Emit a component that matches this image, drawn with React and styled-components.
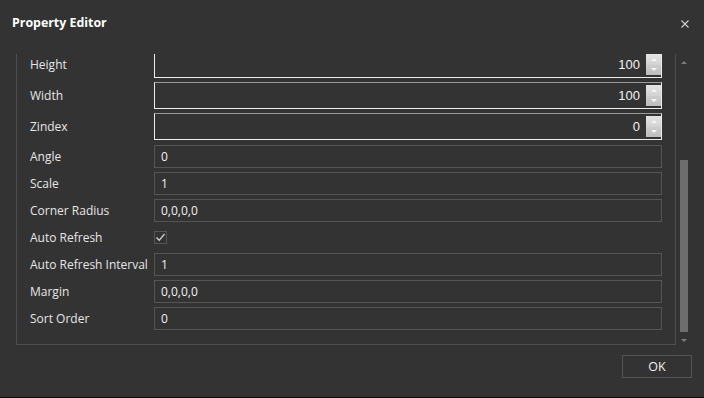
import styled, { createGlobalStyle } from 'styled-components';

const GlobalStyle = createGlobalStyle`
  html, body {
    margin: 0;
    padding: 0;
    background: #333333;
  }
  * {
    box-sizing: border-box;
  }
`;

const Window = styled.div`
  width: 704px;
  height: 398px;
  display: flex;
  flex-direction: column;
  background: #333333;
  border-bottom: 1px solid #0c0c0c;
  font-family: 'Open Sans', 'Noto Sans', sans-serif;
  color: #e8e8e8;
  overflow: hidden;
`;

const TitleBar = styled.div`
  height: 44px;
  display: flex;
  align-items: center;
  justify-content: space-between;
  padding: 0 15px 0 12px;
`;

const Title = styled.div`
  font-size: 12.4px;
  font-weight: 700;
  color: #ffffff;
`;

const CloseButton = styled.button`
  width: 8px;
  height: 8px;
  margin-top: 4px;
  padding: 0;
  border: none;
  background: none;
  display: flex;
  cursor: pointer;
`;

const Body = styled.div`
  padding: 10px 12px 0 16px;
  display: flex;
  height: 304px;
`;

const Viewport = styled.div`
  flex: 1;
  height: 294px;
  display: flex;
  flex-direction: column;
  justify-content: flex-end;
  overflow: hidden;
`;

const Frame = styled.div`
  border: 1px solid #4f4f4f;
  margin-bottom: 3px;
  padding: 0 13px 12px 13px;
`;

const Row = styled.div`
  height: ${(p) => (p.$tall ? 31 : 27)}px;
  padding: ${(p) => (p.$tall ? '1px 0 3px' : '0')};
  display: grid;
  grid-template-columns: 124px 1fr;
  align-items: center;
`;

const Label = styled.div`
  font-size: 12px;
  color: #e6e6e6;
  white-space: nowrap;
`;

const TextBox = styled.div`
  height: 23px;
  border: 1px solid #555555;
  display: flex;
  align-items: center;
  padding-left: 6px;
  font-size: 12px;
  color: #f2f2f2;
`;

const SpinBox = styled.div`
  height: 27px;
  border: 1px solid #ececec;
  border-top-color: #9a9a9a;
  display: flex;
  align-items: center;
  justify-content: flex-end;
  padding: 2px 0 2px 6px;
  font-family: 'Liberation Sans', Arial, sans-serif;
  font-size: 13px;
  color: #f2f2f2;
`;

const SpinValue = styled.span`
  margin-right: 6px;
`;

const SpinButtons = styled.div`
  width: 15px;
  height: 100%;
  display: flex;
  flex-direction: column;
`;

const SpinHalf = styled.div`
  flex: 1;
  display: flex;
  align-items: center;
  justify-content: center;
  background: ${(p) =>
    p.$up
      ? 'linear-gradient(#e4e4e4, #d2d2d2)'
      : 'linear-gradient(#cdcdcd, #bdbdbd)'};
`;

const Tri = styled.div`
  width: 0;
  height: 0;
  border-left: 3px solid transparent;
  border-right: 3px solid transparent;
  ${(p) =>
    p.$up
      ? 'border-bottom: 3px solid #f6f6f6;'
      : 'border-top: 3px solid #f6f6f6;'}
`;

const CheckBox = styled.div`
  width: 13px;
  height: 13px;
  border: 1px solid #555555;
  display: flex;
  align-items: center;
  justify-content: center;
`;

const ScrollBar = styled.div`
  width: 16px;
  height: 294px;
  display: flex;
  flex-direction: column;
  align-items: center;
`;

const ArrowCell = styled.div`
  height: 16px;
  display: flex;
  align-items: center;
  justify-content: center;
`;

const SmallTri = styled.div`
  width: 0;
  height: 0;
  border-left: 3px solid transparent;
  border-right: 3px solid transparent;
  ${(p) =>
    p.$up
      ? 'border-bottom: 3px solid #7a7a7a;'
      : 'border-top: 3px solid #7a7a7a;'}
`;

const Track = styled.div`
  flex: 1;
  width: 8px;
  display: flex;
  flex-direction: column;
  justify-content: flex-end;
`;

const Thumb = styled.div`
  height: 172px;
  background: #6d6d6d;
`;

const Footer = styled.div`
  display: flex;
  justify-content: flex-end;
  padding: 7px 12px 0 0;
`;

const OkButton = styled.button`
  width: 70px;
  height: 23px;
  border: 1px solid #555555;
  background: transparent;
  color: #f0f0f0;
  font-family: 'Open Sans', 'Noto Sans', sans-serif;
  font-size: 12.5px;
  padding: 0;
  cursor: pointer;
`;

const props = [
  { name: 'Height', value: '100', spin: true },
  { name: 'Width', value: '100', spin: true },
  { name: 'Zindex', value: '0', spin: true },
  { name: 'Angle', value: '0' },
  { name: 'Scale', value: '1' },
  { name: 'Corner Radius', value: '0,0,0,0' },
  { name: 'Auto Refresh', check: true },
  { name: 'Auto Refresh Interval', value: '1' },
  { name: 'Margin', value: '0,0,0,0' },
  { name: 'Sort Order', value: '0' },
];

function Editor({ item }) {
  if (item.check) {
    return (
      <CheckBox>
        <svg width='11' height='11' viewBox='0 0 11 11'>
          <path d='M1.5 5.5 L4.2 8.3 L9.5 2' fill='none' stroke='#d4d4d4' strokeWidth='1.3' />
        </svg>
      </CheckBox>
    );
  }
  if (item.spin) {
    return (
      <SpinBox>
        <SpinValue>{item.value}</SpinValue>
        <SpinButtons>
          <SpinHalf $up>
            <Tri $up />
          </SpinHalf>
          <SpinHalf>
            <Tri />
          </SpinHalf>
        </SpinButtons>
      </SpinBox>
    );
  }
  return <TextBox>{item.value}</TextBox>;
}

export default function App() {
  return (
    <>
      <GlobalStyle />
      <Window>
        <TitleBar>
          <Title>Property Editor</Title>
          <CloseButton aria-label='Close'>
            <svg width='8' height='8' viewBox='0 0 8 8'>
              <path d='M0.5 0.5 L7.5 7.5 M7.5 0.5 L0.5 7.5' stroke='#d0d0d0' strokeWidth='1.1' />
            </svg>
          </CloseButton>
        </TitleBar>
        <Body>
          <Viewport>
            <Frame>
              {props.map((item) => (
                <Row key={item.name} $tall={item.spin}>
                  <Label>{item.name}</Label>
                  <Editor item={item} />
                </Row>
              ))}
            </Frame>
          </Viewport>
          <ScrollBar>
            <ArrowCell>
              <SmallTri $up />
            </ArrowCell>
            <Track>
              <Thumb />
            </Track>
            <ArrowCell>
              <SmallTri />
            </ArrowCell>
          </ScrollBar>
        </Body>
        <Footer>
          <OkButton>OK</OkButton>
        </Footer>
      </Window>
    </>
  );
}
